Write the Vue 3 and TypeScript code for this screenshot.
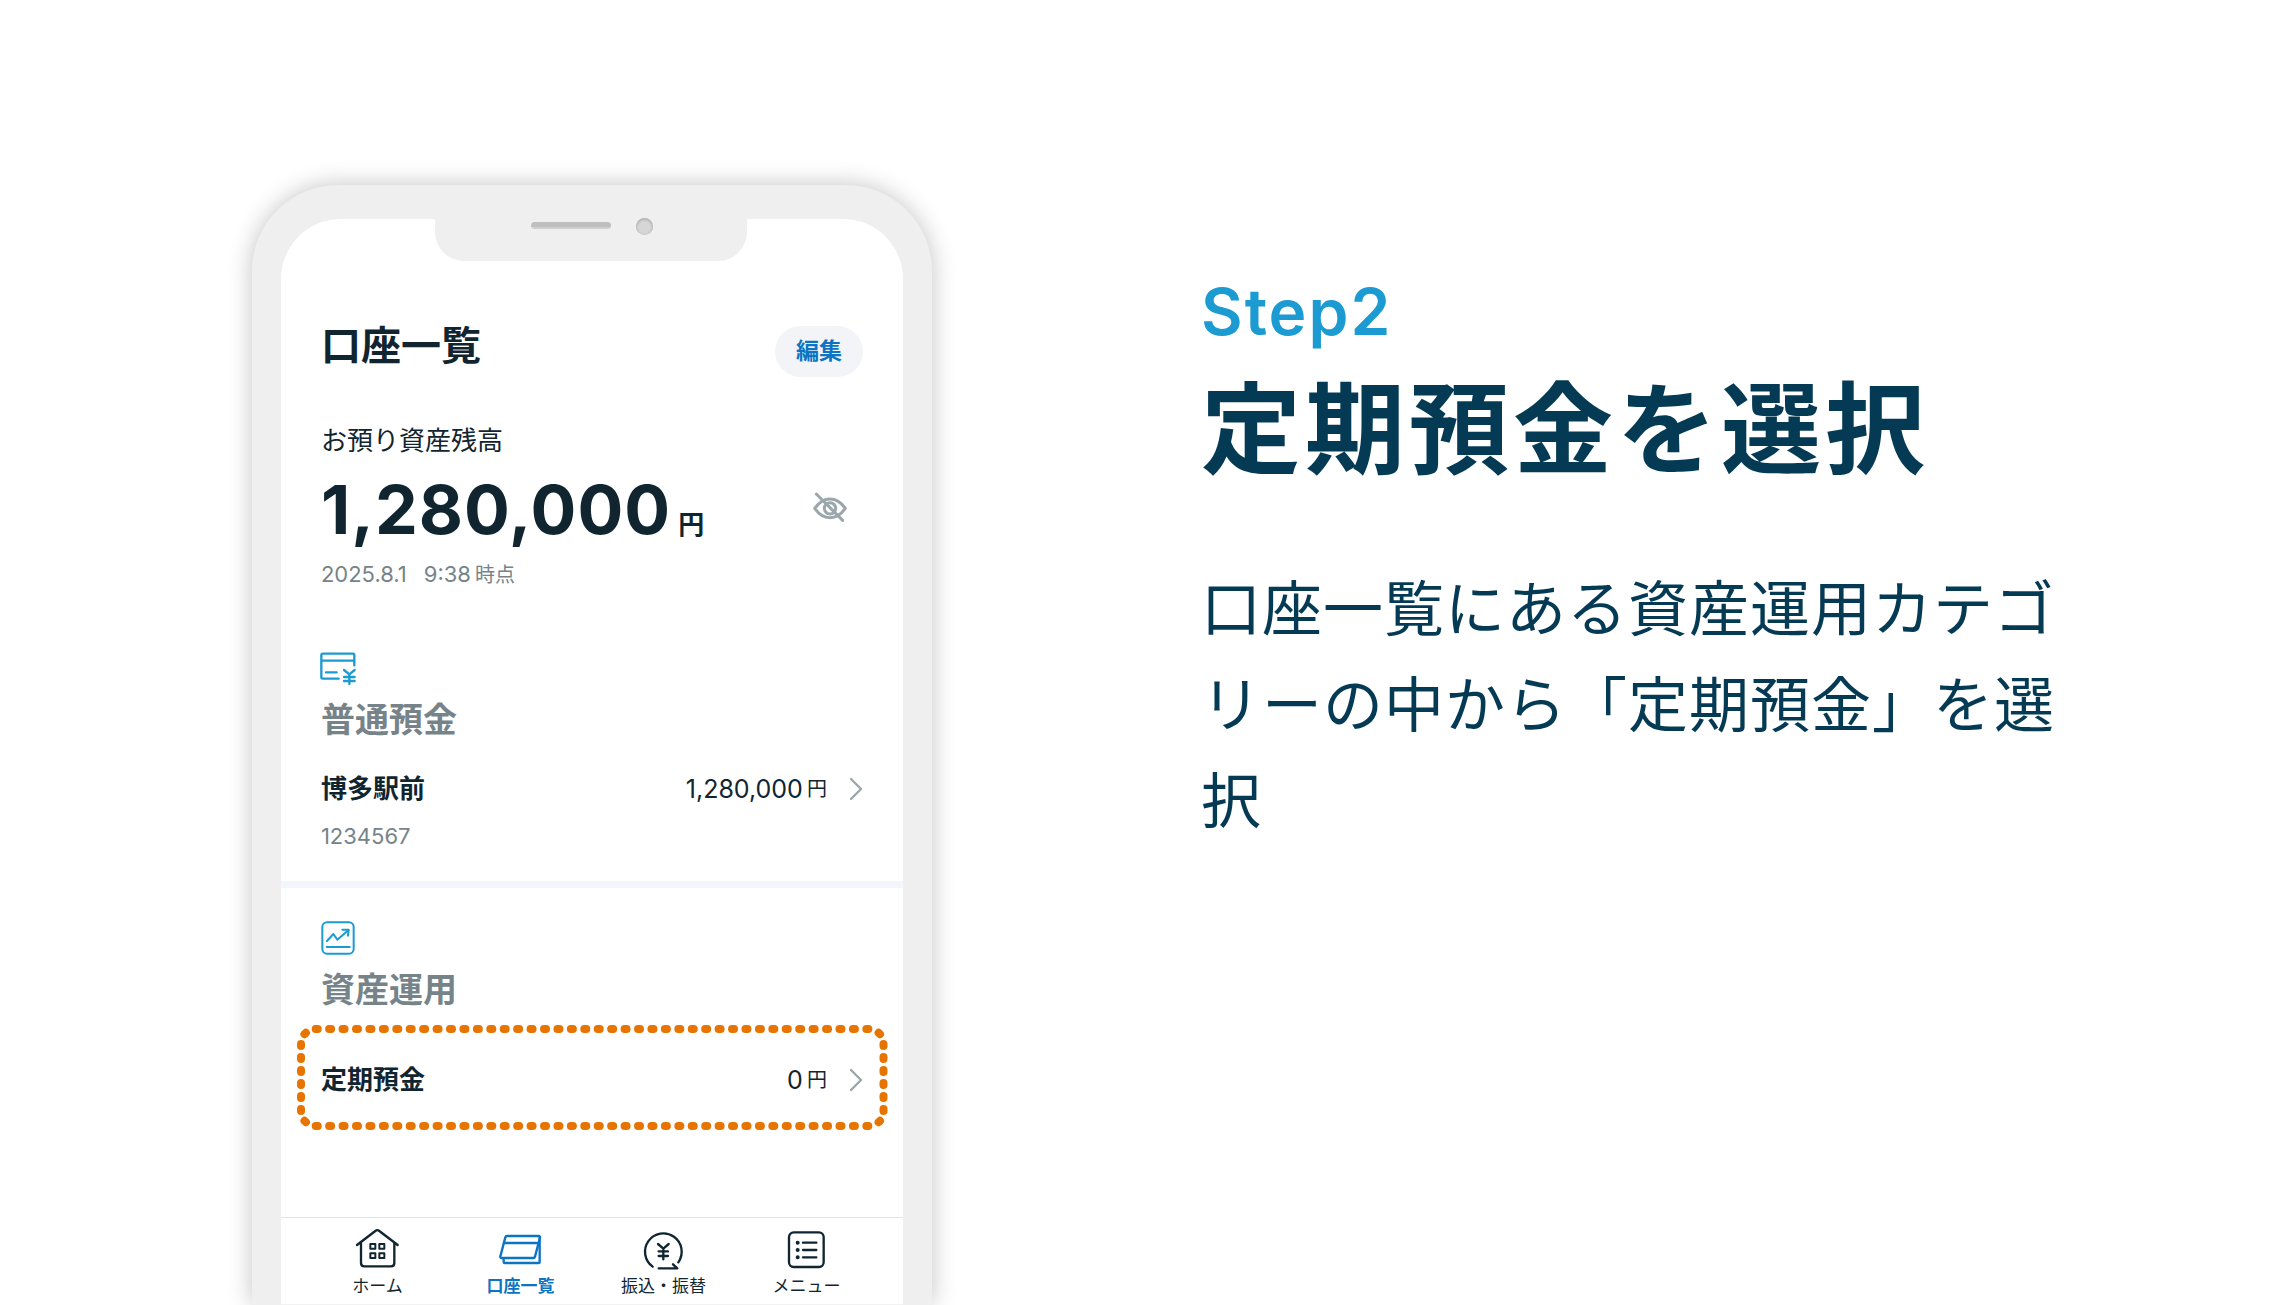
<script setup lang="ts">
interface Tab {
  id: 'home' | 'accounts' | 'transfer' | 'menu'
  label: string
  active?: boolean
}

const tabs: Tab[] = [
  { id: 'home', label: 'ホーム' },
  { id: 'accounts', label: '口座一覧', active: true },
  { id: 'transfer', label: '振込・振替' },
  { id: 'menu', label: 'メニュー' },
]
</script>

<template>
  <main class="page">
    <div class="phone">
      <div class="notch">
        <span class="speaker"></span>
        <span class="camera"></span>
      </div>
      <div class="screen">
        <header class="top">
          <h2 class="screen-title">口座一覧</h2>
          <button class="edit" type="button">編集</button>
        </header>

        <section class="balance">
          <p class="balance-label">お預り資産残高</p>
          <div class="balance-row">
            <p class="balance-value"><span class="big">1,280,000</span><span class="big-unit">円</span></p>
            <button class="eye" type="button" aria-label="残高を隠す">
              <svg width="34" height="30" viewBox="0 0 102 90" fill="none" stroke="currentColor" stroke-width="9" stroke-linecap="round" stroke-linejoin="round">
                <path d="M5 49Q25 21 51 21T97 49Q77 77 51 77T5 49Z" />
                <circle cx="51" cy="49" r="17" />
                <path d="M10 6L89 85" />
              </svg>
            </button>
          </div>
          <p class="as-of"><span>2025.8.1</span><span class="time">9:38</span><span class="as-of-unit">時点</span></p>
        </section>

        <section class="group">
          <svg class="group-icon" width="36" height="34" viewBox="3 0 108 102" fill="none" stroke="currentColor" stroke-width="7" stroke-linecap="round" stroke-linejoin="round">
            <path d="M103 40V10Q103 5 99 5H8Q4 5 4 10V76Q4 80 8 80H56M4 26H103M18 61H50" />
            <path d="M72 54L88 67L104 54M88 67V96M72 75H104M72 87H104" />
          </svg>
          <h3 class="group-title">普通預金</h3>
          <a class="row first-row" href="#ordinary">
            <span class="row-name">博多駅前</span>
            <span class="row-value">1,280,000</span><span class="row-unit">円</span>
            <svg class="chevron" width="14" height="26" viewBox="0 0 14 26" fill="none" stroke="currentColor" stroke-width="2.4" stroke-linecap="round" stroke-linejoin="round">
              <path d="M2 3L12 13L2 23" />
            </svg>
          </a>
          <p class="account-number">1234567</p>
        </section>

        <section class="group second">
          <svg class="group-icon" width="34" height="34" viewBox="0 0 102 102" fill="none" stroke="currentColor" stroke-width="6" stroke-linecap="round" stroke-linejoin="round">
            <rect x="4" y="4" width="94" height="94" rx="14" />
            <path d="M18 60L37 39L49 56L82 28M17 78H86" />
            <path d="M64 26H83L81 44" />
          </svg>
          <h3 class="group-title">資産運用</h3>
          <div class="highlight">
            <a class="row" href="#fixed">
              <span class="row-name">定期預金</span>
              <span class="row-value">0</span><span class="row-unit">円</span>
              <svg class="chevron" width="14" height="26" viewBox="0 0 14 26" fill="none" stroke="currentColor" stroke-width="2.4" stroke-linecap="round" stroke-linejoin="round">
                <path d="M2 3L12 13L2 23" />
              </svg>
            </a>
            <svg class="dots" viewBox="0 0 591 106" fill="none" stroke="#e87400" stroke-width="8" stroke-linecap="round" aria-hidden="true">
              <path stroke-dasharray="2 11.43" d="M18.7 4H571.5M18.7 101H571.5" />
              <path stroke-dasharray="2 11" d="M4 19V87M586.5 19V87" />
              <path d="M7.5 9.2L8.9 7.8M581.6 7.8L583 9.2M7.5 95.8L8.9 97.2M583 95.8L581.6 97.2" />
            </svg>
          </div>
        </section>

        <nav class="tabs">
          <a v-for="tab in tabs" :key="tab.id" :href="'#' + tab.id" class="tab" :class="{ active: tab.active }">
            <svg width="45" height="42" viewBox="0 0 135 126" fill="none" stroke="currentColor" stroke-width="7" stroke-linecap="round" stroke-linejoin="round">
              <template v-if="tab.id === 'home'">
                <path d="M6 51L61 9Q67 4 73 9L128 51M18 43V105Q18 115 28 115H108Q118 115 118 105V43" />
                <path stroke-width="6" d="M46 48H61V62H46ZM73 48H88V62H73ZM46 76H61V90H46ZM73 76H88V90H73Z" />
              </template>
              <template v-else-if="tab.id === 'accounts'">
                <path d="M27 24H122Q127 24 126 29L111 86Q110 90 106 90H11Q6 90 7 85L22 28Q23 24 27 24ZM17 45H120" />
                <path d="M17 92V101Q17 105 21 105H121Q125 105 125 101V30" />
              </template>
              <template v-else-if="tab.id === 'transfer'">
                <path d="M35 116A55 55 0 1 1 112 103M53 121H109L96 109" />
                <path d="M51 48L67 62L83 48M67 62V94M53 70H81M53 84H81" />
              </template>
              <template v-else>
                <rect x="15" y="13" width="104" height="104" rx="14" />
                <path d="M57 44H97M57 66H97M57 88H97" />
                <path stroke-width="12" d="M41 44H41.1M41 66H41.1M41 88H41.1" />
              </template>
            </svg>
            <span>{{ tab.label }}</span>
          </a>
        </nav>
      </div>
    </div>

    <section class="guide">
      <p class="step">Step2</p>
      <h1 class="guide-title">定期預金を選択</h1>
      <p class="guide-text">口座一覧にある資産運用カテゴリーの中から「定期預金」を選択</p>
    </section>
  </main>
</template>

<style>
body {
  background: #fff;
}
</style>

<style scoped>
.page {
  box-sizing: border-box;
  display: grid;
  grid-template-columns: 680px minmax(0, 860px);
  justify-content: space-between;
  height: 100vh;
  min-height: 1240px;
  padding: 0 10vw 0 11vw;
  overflow: hidden;
  font-family: Inter, "Noto Sans CJK JP", sans-serif;
  color: #10252f;
}

h1,
h2,
h3,
p {
  margin: 0;
}

a {
  color: inherit;
  text-decoration: none;
}

button {
  border: 0;
  padding: 0;
  font-family: inherit;
  cursor: pointer;
}

svg {
  display: block;
  flex: none;
  overflow: visible;
}

.phone {
  position: relative;
  box-sizing: border-box;
  display: flex;
  margin-top: 185px;
  padding: 34px 29px 0;
  border-radius: 86px 86px 0 0;
  background: #efefef;
  box-shadow: 0 0 24px rgba(0, 0, 0, 0.24);
}

.notch {
  position: absolute;
  top: 33px;
  left: 183px;
  right: 185px;
  height: 43px;
  border-radius: 0 0 29px 29px;
  background: #efefef;
}

.speaker {
  position: absolute;
  top: 4px;
  left: 96px;
  width: 80px;
  height: 7px;
  border-radius: 4px;
  background: linear-gradient(#bfbfbf 70%, #cfcfcf 70%);
}

.camera {
  position: absolute;
  top: 0;
  left: 201px;
  width: 17px;
  height: 17px;
  border-radius: 50%;
  background: #d6d6d6;
  box-shadow: inset 0 1px 2px 1px #b4b4b4;
}

.screen {
  box-sizing: border-box;
  display: flex;
  flex: 1;
  flex-direction: column;
  padding-top: 107px;
  border-radius: 60px 60px 0 0;
  background: #fff;
}

.top,
.balance,
.group {
  padding-left: 40px;
  padding-right: 40px;
}

.top {
  display: flex;
  align-items: flex-start;
  justify-content: space-between;
}

.screen-title {
  font-size: 40px;
  font-weight: 700;
  line-height: 40px;
}

.edit {
  width: 88px;
  height: 51px;
  padding-bottom: 6px;
  border-radius: 26px;
  background: #f2f4f7;
  color: #0d74c4;
  font-size: 23px;
  font-weight: 700;
}

.balance {
  margin-top: 51px;
}

.balance-label {
  font-size: 26px;
  line-height: 26px;
}

.balance-row {
  display: flex;
  align-items: center;
  justify-content: space-between;
  height: 68px;
  margin-top: 21px;
}

.balance-value {
  display: flex;
  align-items: baseline;
  gap: 7px;
}

.big {
  font-size: 68px;
  font-weight: 700;
  line-height: 68px;
  letter-spacing: 1px;
}

.big-unit {
  font-size: 26px;
  font-weight: 700;
  line-height: 26px;
}

.eye {
  margin: 0 16px 4px 0;
  background: none;
  color: #9ba7ab;
}

.as-of {
  display: flex;
  align-items: baseline;
  margin-top: 20px;
  color: #768489;
  font-size: 22px;
  line-height: 22px;
}

.time {
  margin-left: 17px;
}

.as-of-unit {
  margin-left: 4px;
  font-size: 20px;
}

.group {
  margin-top: 66px;
}

.group.second {
  margin-top: 34px;
  padding-top: 33px;
  border-top: 7px solid #f2f6fb;
}

.group-icon {
  color: #1c9ad2;
}

.group-title {
  margin-top: 17px;
  color: #768489;
  font-size: 34px;
  font-weight: 700;
  line-height: 34px;
}

.second .group-title {
  margin-top: 18px;
}

.row {
  display: flex;
  align-items: center;
  height: 26px;
  line-height: 26px;
}

.first-row {
  margin-top: 39px;
}

.row-name {
  flex: 1;
  font-size: 26px;
  font-weight: 700;
}

.row-value {
  font-size: 25px;
}

.row-unit {
  margin-left: 4px;
  font-size: 20px;
}

.chevron {
  margin-left: 22px;
  color: #9ba7ab;
}

.account-number {
  margin-top: 23px;
  color: #768489;
  font-size: 22px;
  line-height: 22px;
}

.highlight {
  position: relative;
  box-sizing: border-box;
  height: 106px;
  margin: 18px -25px 0 -24px;
  padding: 42px 25px 0 24px;
}

.dots {
  position: absolute;
  inset: 0;
  width: 100%;
  height: 100%;
  pointer-events: none;
}

.tabs {
  box-sizing: border-box;
  display: flex;
  height: 88px;
  margin-top: auto;
  padding: 10px 25px 0;
  border-top: 1px solid #dfe5e6;
  border-bottom: 1px solid #f2f2f2;
}

.tab {
  display: flex;
  flex: 1;
  flex-direction: column;
  align-items: center;
  gap: 4px;
  font-size: 17px;
  line-height: 24px;
}

.tab.active {
  color: #0d74c4;
  font-weight: 700;
}

.guide {
  padding-top: 280px;
  color: #043a54;
}

.step {
  color: #1c9ad2;
  font-size: 64px;
  font-weight: 600;
  line-height: 64px;
  letter-spacing: 2px;
}

.guide-title {
  margin-top: 36px;
  font-size: 100px;
  font-weight: 700;
  line-height: 100px;
  letter-spacing: 4px;
  white-space: nowrap;
}

.guide-text {
  margin-top: 81px;
  font-size: 60px;
  line-height: 96px;
  letter-spacing: 1px;
}
</style>
